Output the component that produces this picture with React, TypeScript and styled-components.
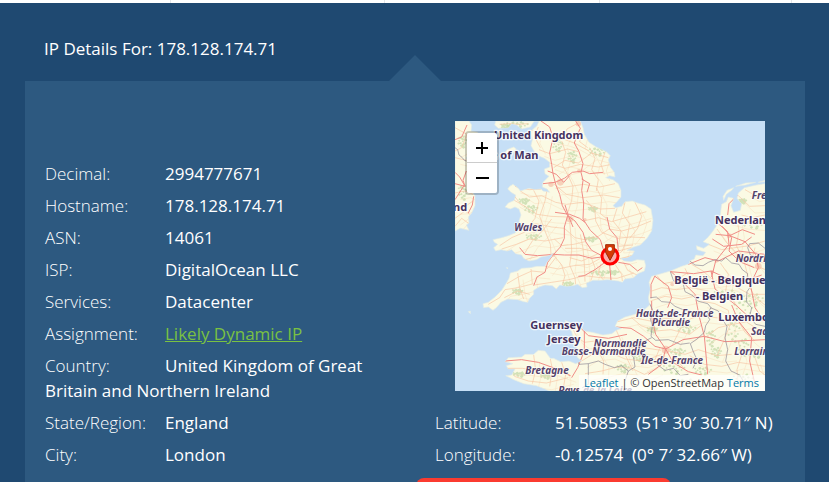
import React from "react";
import styled, { createGlobalStyle } from "styled-components";

const GlobalStyle = createGlobalStyle`
  *, *::before, *::after { box-sizing: border-box; }
  body { margin: 0; background: #1f4971; }
`;

const Page = styled.main`
  display: flex;
  flex-direction: column;
  height: 100vh;
  overflow-y: auto;
  scrollbar-width: none;
  background: #1f4971;
  color: #fff;
  font: 400 17px/25px "Open Sans", sans-serif;
`;

const TopStrip = styled.div`
  display: grid;
  grid-template-columns: 171fr 214fr 215fr 192fr 37fr;
  flex: none;
  height: 3px;
  background: #fff;
`;

const StripCell = styled.div`
  border-right: 1px solid #e4e6e9;
  &:last-child { border-right: 0; }
`;

const Title = styled.h1`
  flex: none;
  margin: 0;
  padding: 33px 44px 20px;
  font: 400 17px/25px "Open Sans", sans-serif;
`;

const Panel = styled.section`
  position: relative;
  flex: 1 0 auto;
  margin: 0 24px 0 25px;
  background: #2d5980;

  &::before {
    content: "";
    position: absolute;
    left: 50%;
    bottom: 100%;
    transform: translateX(-50%);
    border: solid transparent;
    border-width: 0 26px 26px;
    border-bottom-color: #2d5980;
  }
`;

const Columns = styled.div`
  display: grid;
  grid-template-columns: 1fr 1fr;
  align-items: end;
`;

const Column = styled.div`
  min-width: 0;
  padding: 40px 20px 0;
`;

const Details = styled.dl`
  display: flex;
  flex-direction: column;
  gap: 7px;
  margin: 0;
`;

const Detail = styled.div``;

const Term = styled.dt`
  display: inline-block;
  width: 120px;
  font-weight: 300;
`;

const Value = styled.dd<{ $nowrap?: boolean }>`
  display: inline;
  margin: 0;
  font-weight: 500;
  white-space: ${(p) => (p.$nowrap ? "pre" : "normal")};
`;

const AssignmentLink = styled.a`
  color: #7ac143;
  font-weight: 400;
  text-decoration: underline;
`;

const MapFrame = styled.div`
  position: relative;
  margin: 0 20px 19px;
  height: 270px;
  overflow: hidden;
  background: #c6dff6;
`;

const MapDrawing = styled.svg`
  display: block;
  width: 100%;
  height: 100%;
`;

const ZoomBar = styled.div`
  position: absolute;
  top: 10px;
  left: 10px;
  width: 34px;
  border: 2px solid rgba(0, 0, 0, 0.2);
  border-radius: 4px;
  background-clip: padding-box;
`;

const ZoomButton = styled.button`
  display: block;
  width: 30px;
  height: 30px;
  padding: 0;
  border: 0;
  background: #fff;
  &:first-child { border-bottom: 1px solid #ccc; border-radius: 2px 2px 0 0; }
  &:last-child { border-radius: 0 0 2px 2px; }
  svg { display: block; margin: auto; }
`;

const Attribution = styled.div`
  position: absolute;
  right: 0;
  bottom: 0;
  padding: 0 6px 1px 5px;
  background: rgba(255, 255, 255, 0.7);
  color: #333;
  font: 400 11px/15px "Open Sans", sans-serif;
  white-space: nowrap;
  a { color: #0078a8; text-decoration: none; }
`;

const Actions = styled.div`
  padding: 11px 0 20px 50%;
`;

const ActionButton = styled.button`
  display: block;
  width: 255px;
  height: 44px;
  margin-left: 1px;
  border: 0;
  border-radius: 8px;
  background: #fb3b30;
`;

const MapLabel = styled.text<{ $region?: boolean }>`
  font-family: "Noto Sans", sans-serif;
  font-weight: 700;
  font-style: ${(p) => (p.$region ? "italic" : "normal")};
  font-size: ${(p) => (p.$region ? 30 : 33)}px;
  fill: ${(p) => (p.$region ? "#55436b" : "#46325f")};
  stroke: #fff;
  stroke-opacity: 0.75;
  stroke-width: ${(p) => (p.$region ? 5 : 8)}px;
  stroke-linejoin: round;
  paint-order: stroke;
`;

const britain =
  "M122 0 L119 12 130 22 160 20 170 8 185 12 200 24 226 18 238 0 L252 0 246 14 228 30 232 56 228 74 238 92 254 106 268 112 284 124 284 138 268 144 270 158 282 166 264 184 262 198 276 204 284 214 264 210 258 204 240 206 222 202 196 210 190 202 174 190 164 196 158 204 168 214 182 222 178 238 160 246 150 258 166 264 180 258 192 264 198 282 192 300 196 320 180 336 160 344 140 350 114 356 118 364 128 370 116 380 122 390 138 386 156 390 170 386 182 398 200 402 206 412 222 420 244 416 258 408 280 404 296 396 288 410 276 424 270 436 246 436 226 440 200 442 188 450 166 456 162 472 154 486 140 508 120 528 100 544 84 548 86 560 100 558 114 568 124 560 138 544 158 534 188 536 206 542 218 544 224 532 236 520 236 508 252 498 270 492 292 494 304 504 314 492 334 496 354 494 368 490 382 500 396 498 394 486 414 478 436 478 458 476 490 480 502 484 510 474 536 470 548 458 568 450 572 434 568 418 546 416 528 422 508 420 496 412 516 410 532 402 538 390 516 388 536 378 556 372 576 352 590 330 594 298 588 264 570 252 548 246 532 240 510 242 500 256 482 260 474 254 488 240 498 228 498 208 490 188 474 176 452 170 464 164 480 168 478 154 466 138 460 116 466 104 454 92 424 78 402 64 388 40 384 20 376 0 Z";
const ireland =
  "M0 0 L42 0 50 12 48 30 68 34 70 60 52 72 58 82 44 104 34 110 42 130 48 152 40 166 48 184 48 208 60 224 60 254 50 276 40 288 42 306 34 312 42 328 16 322 0 330 Z";
const continent =
  "M930 188 L904 192 868 200 850 216 846 232 860 248 856 268 836 274 828 254 836 232 820 228 814 242 800 250 796 280 790 306 774 330 758 350 744 362 764 370 746 382 724 374 726 386 752 394 744 404 722 402 718 414 704 420 704 428 680 436 646 450 612 460 590 466 582 484 586 504 580 530 584 552 566 568 540 580 510 588 488 600 480 616 500 622 484 628 470 638 444 642 412 634 388 630 374 614 346 606 330 598 336 614 350 632 356 658 366 686 366 708 380 720 362 728 342 720 316 722 296 712 286 712 270 690 250 688 236 700 210 700 200 708 160 710 150 722 174 728 154 734 160 744 180 744 170 762 152 764 176 776 206 788 244 794 270 804 282 810 H930 Z";

const mainRoads = [
  "M258 0 L284 18 294 50 284 96 290 130 294 158 302 190 314 220 322 254 338 284 328 318 328 352 316 378 296 400 278 424 270 454 246 468 236 494",
  "M362 0 L376 22 366 44 358 66 372 92 384 128 378 154 384 178 380 208 386 246 384 294 406 328 436 356 444 382 462 404",
  "M264 188 L300 184 328 172 352 154 384 150 404 158 444 154",
  "M338 284 L360 300 384 334 392 362 410 388 440 404",
  "M194 380 L210 400 248 404 296 400 328 402 372 402 410 412 440 408",
  "M464 432 L468 478 M450 424 L420 446 388 464 370 466 M490 424 L524 430 548 450 562 440 M490 390 L486 350 464 324 456 288",
  "M300 274 L344 280 374 292 390 304 M330 252 L340 284 354 318 M380 174 L404 188 396 214 M278 150 L304 160 326 184 344 164",
  "M600 464 L588 490 588 532 M600 466 L640 496 650 530 638 560 M646 450 L690 490 720 520 732 584 748 646 752 690 758 760",
  "M484 618 L528 622 566 646 600 676 632 684 684 656 748 646 810 662 930 656",
  "M632 684 L654 724 700 752 740 762 M632 684 L620 730 580 760 M632 684 L602 640 590 588 590 540",
  "M366 610 L400 644 460 652 516 640 M388 630 L388 690 368 740 350 770 M150 720 L200 716 250 724 300 742 346 764",
  "M848 222 L822 248 818 282 M782 340 L824 344 862 326 900 340 M790 308 L818 332 822 370 782 420 770 468",
  "M824 344 L870 362 902 400 910 440 886 490 900 560 920 590 M700 430 L750 410 790 420 850 390 930 400",
  "M646 452 L716 458 768 450 812 470 870 480 920 462 M768 450 L780 504 840 550 886 592 930 600",
  "M772 354 L806 376 860 370 890 348 M802 316 L830 350 822 390 854 422 898 440 M830 552 L850 600 890 650 884 720 900 790",
  "M0 154 L14 168 28 192 0 236 M34 150 L24 178 30 196 0 188 M0 56 L20 48 36 12 M56 226 L52 252 40 276",
];

const minorRoads = [
  "M254 28 L288 48 330 56 358 66 402 90 M252 86 L284 98 338 84 370 92 M296 140 L330 118 370 126 410 96 460 110",
  "M284 126 L330 142 376 130 430 138 470 130 M302 202 L346 196 386 190 434 198 480 188",
  "M296 188 L334 220 384 230 446 222 494 230 M196 210 L224 228 260 224 302 244 334 250 384 244 436 264 480 262",
  "M178 238 L210 256 246 280 288 286 336 288 M196 320 L244 308 290 318 328 322 M134 374 L170 350 208 334 240 292 252 240 236 208",
  "M140 384 L184 370 222 354 270 360 324 350 M208 398 L232 360 262 330 290 294 M276 206 L270 240 254 286 270 330 286 370 288 400",
  "M328 322 L360 350 388 356 430 346 462 324 500 330 544 318 588 300 M384 300 L430 290 470 302 526 286 574 272",
  "M394 238 L420 270 422 300 440 334 488 352 524 348 570 350 M510 244 L502 276 524 310 516 352 502 390 486 402",
  "M540 244 L560 286 548 322 524 352 M486 262 L474 300 498 330 490 376 534 372 M424 200 L440 232 436 278 454 292",
  "M404 80 L420 112 410 146 430 176 424 210 M450 94 L438 130 448 160 M320 60 L332 94 322 132 340 164 354 196 350 238 338 276",
  "M296 402 L320 432 330 464 322 492 M270 436 L310 444 356 434 404 430 436 412 M238 492 L290 484 342 476 388 464 436 470 486 472 536 456",
  "M344 300 L348 348 350 390 344 432 360 470 362 490 M376 340 L384 382 388 430 390 482 M408 408 L420 440 408 478",
  "M480 430 L500 460 502 480 M506 424 L518 448 546 462 M438 428 L430 456 444 476 M474 394 L528 380 M494 414 L530 404",
  "M100 550 L134 530 150 506 188 500 236 488 M148 530 L188 510 224 520 M156 488 L190 468 230 450 270 454 M188 456 L194 500 206 534 M228 444 L232 488",
  "M298 354 L320 374 356 370 390 362 M210 416 L248 406 M330 382 L374 382 410 390 M344 410 L380 420 430 398 M302 410 L276 444",
  "M180 196 L222 206 258 204 M172 218 L190 240 M366 8 L336 24 322 54 M382 34 L374 62 398 80",
  "M0 20 L36 40 20 80 0 90 M0 110 L34 118 M0 216 L30 210 54 220 M0 292 L30 270 44 280 M0 260 L28 258 54 240 M42 308 L20 292 0 316",
  "M348 612 L366 648 388 664 420 660 460 676 510 680 566 680 618 688 M380 720 L412 700 464 694 510 714 564 720 620 700",
  "M390 758 L440 750 486 738 530 742 568 760 608 742 M484 628 L498 660 510 700 534 750 M420 650 L430 692 446 720 444 760",
  "M488 602 L536 590 586 600 636 592 690 600 732 584 800 592 M530 590 L558 614 602 630 648 626 704 640 740 612",
  "M586 540 L630 526 680 534 726 524 M590 510 L620 500 664 506 708 500 760 510 M606 464 L626 488 656 482 700 454",
  "M640 690 L690 700 730 686 786 704 830 700 M650 676 L668 640 690 600 M614 682 L600 716 560 732 M654 700 L684 740 M750 650 L790 620 832 610 890 600",
  "M786 704 L806 660 826 610 820 568 780 548 740 540 M704 704 L748 730 800 736 850 724 930 736 M850 662 L860 702 846 746 850 800",
  "M158 742 L202 742 246 748 292 744 348 764 M178 766 L220 780 274 786 340 770 M236 702 L242 748 232 788 M286 714 L292 744 284 796 M320 724 L332 760 326 796",
  "M870 206 L898 222 930 214 M850 224 L884 256 930 254 M860 282 L890 290 930 282 M812 290 L860 304 930 310",
  "M786 324 L814 364 850 402 884 420 930 426 M760 370 L800 386 840 380 884 374 930 360 M844 282 L852 330 844 374 866 416 880 470",
  "M710 430 L744 450 782 484 830 490 884 520 930 520 M690 442 L710 484 760 482 812 474 M796 426 L820 460 812 510 840 546",
  "M900 380 L892 410 914 438 930 446 M884 500 L902 530 930 552 M876 604 L910 626 930 632 M850 600 L870 634 900 660 M900 710 L914 750 930 762",
  "M134 10 L160 8 190 10 220 8 M250 18 L238 46 256 80",
];

const borders = [
  "M0 80 L8 86 12 102 22 110 28 118 34 120",
  "M646 452 L656 480 684 486 690 512 714 524 728 540 758 548 768 560 756 580 764 596 752 614 748 634 726 654 706 668 714 690",
  "M586 530 L604 528 620 542 646 544 660 556 684 566 710 572 730 580",
  "M584 548 L596 574 586 592 592 614 588 646 602 658 640 656 676 670 704 666",
  "M704 420 L720 432 744 434 760 424 780 416 800 420 812 410 830 426 852 430 862 446 878 458 876 474 894 490",
  "M930 382 L910 366 884 368 878 380 886 402 904 408 930 406",
  "M766 560 L790 570 800 592 816 616 810 650 818 686 812 720 828 750 854 762 868 786",
  "M890 492 L876 512 874 542 890 560 884 586 902 610 930 616",
  "M366 712 L372 730 400 728 430 720 450 730 478 740 500 734 520 750 540 738 536 710 520 688 528 672 570 660 590 650",
  "M400 728 L400 790 382 800 M606 730 L630 748 656 742 676 764 700 760 M714 690 L726 716 714 742 M520 750 L510 780",
];

const woods: [number, number, number, number][] = [
  [224, 262, 16, 9], [204, 238, 12, 6], [232, 346, 18, 6], [424, 90, 20, 10], [304, 70, 12, 16], [348, 106, 10, 14],
  [404, 352, 14, 5], [336, 488, 12, 6], [430, 454, 22, 5], [184, 510, 12, 6], [470, 452, 14, 4], [410, 262, 10, 5],
  [812, 520, 32, 12], [860, 566, 22, 26], [890, 534, 24, 14], [832, 628, 14, 28], [862, 676, 12, 22],
  [764, 650, 10, 20], [690, 622, 22, 9], [664, 690, 18, 8], [652, 742, 26, 12], [546, 706, 12, 10],
  [740, 748, 20, 10], [900, 696, 20, 10], [860, 238, 8, 5], [892, 308, 26, 10], [190, 758, 16, 5],
  [270, 764, 14, 5], [588, 624, 12, 6], [780, 692, 12, 12], [18, 60, 10, 14], [20, 212, 10, 18], [500, 740, 14, 10],
  [690, 784, 26, 10], [860, 774, 24, 14], [182, 10, 26, 8], [148, 14, 10, 6],
];

/* Scatters small patches inside a wood's extent so that it reads as broken forest. */
function woodPatches([x, y, rx, ry]: [number, number, number, number]) {
  let d = "";
  for (let k = 0; k < 14; k++) {
    const angle = k * 2.4;
    const reach = Math.sqrt((k + 1) / 14) * 1.3;
    const px = Math.round(x + Math.cos(angle) * rx * reach);
    const py = Math.round(y + Math.sin(angle) * ry * reach);
    const size = 3 + ((k * 5) % 4);
    d += `M${px} ${py} l${size} -2 3 ${size} -${size} 3 -4 -3 Z `;
  }
  return d;
}

const cities: [number, number, number][] = [
  [316, 184, 10], [288, 190, 8], [344, 294, 10], [372, 150, 6], [632, 686, 12], [390, 296, 5],
  [772, 452, 5], [822, 344, 7], [784, 420, 5], [652, 490, 6], [910, 436, 10], [370, 8, 8], [296, 402, 5],
];

const labels: { x: number; y: number; text: string; region?: boolean }[] = [
  { x: 117, y: 54, text: "United Kingdom" },
  { x: 98, y: 113, text: "le of Man" },
  { x: -6, y: 269, text: "nd" },
  { x: 780, y: 308, text: "Nederland" },
  { x: 658, y: 488, text: "België - Belgique" },
  { x: 722, y: 536, text: "- Belgien" },
  { x: 790, y: 600, text: "Luxembourg" },
  { x: 226, y: 624, text: "Guernsey" },
  { x: 277, y: 665, text: "Jersey" },
  { x: 178, y: 329, text: "Wales", region: true },
  { x: 890, y: 234, text: "Fre", region: true },
  { x: 842, y: 423, text: "Nordrh", region: true },
  { x: 543, y: 587, text: "Hauts-de-France", region: true },
  { x: 590, y: 615, text: "Picardie", region: true },
  { x: 888, y: 641, text: "Saar", region: true },
  { x: 416, y: 677, text: "Normandie", region: true },
  { x: 320, y: 703, text: "Basse-Normandie", region: true },
  { x: 558, y: 730, text: "Île-de-France", region: true },
  { x: 838, y: 701, text: "Lorraine", region: true },
  { x: 211, y: 760, text: "Bretagne", region: true },
  { x: 310, y: 818, text: "Pays de la Loire", region: true },
];

function RegionMap() {
  return (
    <MapDrawing viewBox="0 0 930 810" preserveAspectRatio="xMidYMid slice" role="img" aria-label="Map">
      <defs>
        <clipPath id="land">
          <path d={britain} />
          <path d={ireland} />
          <path d={continent} />
        </clipPath>
      </defs>
      <rect width="930" height="810" fill="#c6dff6" />
      <g fill="#fbfae4" stroke="#e3ebe6" strokeWidth="2">
        <path d={britain} />
        <path d={ireland} />
        <path d={continent} />
        <path d="M142 104 L156 86 176 78 184 84 170 100 150 112 Z" />
        <path d="M804 226 L816 208 836 200 830 208 814 220 806 238 Z M842 196 L872 186 902 184 872 192 Z M910 184 L930 178 930 182 Z" />
        <path d="M40 572 L46 570 46 578 Z M154 440 l4 0 0 4 Z" />
      </g>
      <g clipPath="url(#land)" fill="none" strokeLinejoin="round">
        {woods.map((wood, i) => (
          <path key={i} d={woodPatches(wood)} fill="#bcd6a2" opacity="0.65" />
        ))}
        <g transform="translate(16 20)" opacity="0.55">
          {minorRoads.map((d, i) => (
            <path key={i} d={d} stroke="#f8d3b0" strokeWidth="2" />
          ))}
        </g>
        {minorRoads.map((d, i) => (
          <path key={i} d={d} stroke="#f8c6a4" strokeWidth="2" />
        ))}
        {cities.map(([x, y, r], i) => (
          <circle key={i} cx={x} cy={y} r={r} fill="#f5c0a8" opacity="0.7" />
        ))}
        {mainRoads.map((d, i) => (
          <path key={i} d={d} stroke="#f08c86" strokeWidth="3" />
        ))}
        {borders.map((d, i) => (
          <path key={i} d={d} stroke="#8d8794" strokeWidth="2" />
        ))}
      </g>
      {labels.map((l) => (
        <MapLabel key={l.text} x={l.x} y={l.y} $region={l.region}>
          {l.text}
        </MapLabel>
      ))}
      <circle cx="465" cy="405" r="24" fill="#ff0033" fillOpacity="0.3" stroke="#ff0000" strokeWidth="9" />
      <path d="M452 371 H478 V394 L465 418 452 394 Z" fill="#d63a05" stroke="#a02a08" strokeWidth="3" />
      <circle cx="465" cy="384" r="6" fill="#fff" />
    </MapDrawing>
  );
}

const details: { term: string; value: React.ReactNode }[] = [
  { term: "Decimal:", value: "2994777671" },
  { term: "Hostname:", value: "178.128.174.71" },
  { term: "ASN:", value: "14061" },
  { term: "ISP:", value: "DigitalOcean LLC" },
  { term: "Services:", value: "Datacenter" },
  { term: "Assignment:", value: <AssignmentLink href="#dynamic">Likely Dynamic IP</AssignmentLink> },
  { term: "Country:", value: "United Kingdom of Great Britain and Northern Ireland" },
  { term: "State/Region:", value: "England" },
  { term: "City:", value: "London" },
];

const coordinates = [
  { term: "Latitude:", value: "51.50853  (51° 30′ 30.71″ N)" },
  { term: "Longitude:", value: "-0.12574  (0° 7′ 32.66″ W)" },
];

export default function App() {
  return (
    <>
      <GlobalStyle />
      <Page>
        <TopStrip>
          <StripCell />
          <StripCell />
          <StripCell />
          <StripCell />
          <StripCell />
        </TopStrip>
        <Title>IP Details For: 178.128.174.71</Title>
        <Panel>
          <Columns>
            <Column>
              <Details>
                {details.map((d) => (
                  <Detail key={d.term}>
                    <Term>{d.term}</Term>
                    <Value>{d.value}</Value>
                  </Detail>
                ))}
              </Details>
            </Column>
            <Column>
              <MapFrame>
                <RegionMap />
                <ZoomBar>
                  <ZoomButton type="button" aria-label="Zoom in">
                    <svg width="14" height="14" viewBox="0 0 14 14" stroke="#000" strokeWidth="2">
                      <path d="M1 7 H13 M7 1 V13" />
                    </svg>
                  </ZoomButton>
                  <ZoomButton type="button" aria-label="Zoom out">
                    <svg width="14" height="14" viewBox="0 0 14 14" stroke="#000" strokeWidth="2">
                      <path d="M1 7 H14" />
                    </svg>
                  </ZoomButton>
                </ZoomBar>
                <Attribution>
                  <a href="#leaflet">Leaflet</a> | © OpenStreetMap <a href="#terms">Terms</a>
                </Attribution>
              </MapFrame>
              <Details>
                {coordinates.map((c) => (
                  <Detail key={c.term}>
                    <Term>{c.term}</Term>
                    <Value $nowrap>{c.value}</Value>
                  </Detail>
                ))}
              </Details>
            </Column>
          </Columns>
          <Actions>
            <ActionButton type="button" />
          </Actions>
        </Panel>
      </Page>
    </>
  );
}
